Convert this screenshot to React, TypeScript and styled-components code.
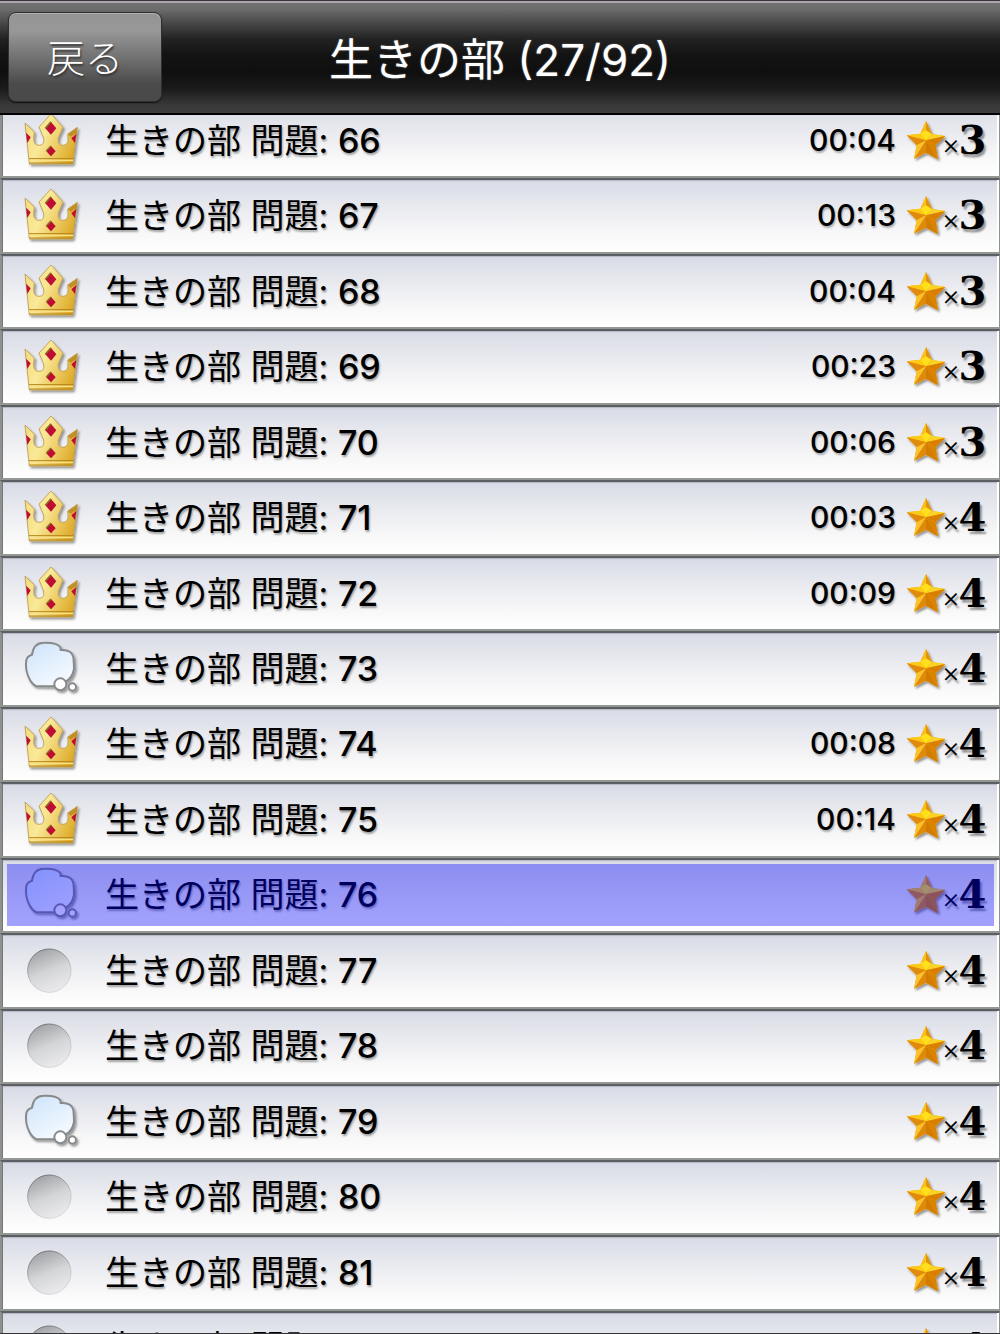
import React, { useLayoutEffect, useRef, useState } from "react";
import styled, { createGlobalStyle, css } from "styled-components";

type Status = "solved" | "thinking" | "open";

interface Problem {
  id: number;
  status: Status;
  level: number;
  time?: string;
}

const problems: Problem[] = [
  { id: 66, status: "solved", level: 3, time: "00:04" },
  { id: 67, status: "solved", level: 3, time: "00:13" },
  { id: 68, status: "solved", level: 3, time: "00:04" },
  { id: 69, status: "solved", level: 3, time: "00:23" },
  { id: 70, status: "solved", level: 3, time: "00:06" },
  { id: 71, status: "solved", level: 4, time: "00:03" },
  { id: 72, status: "solved", level: 4, time: "00:09" },
  { id: 73, status: "thinking", level: 4 },
  { id: 74, status: "solved", level: 4, time: "00:08" },
  { id: 75, status: "solved", level: 4, time: "00:14" },
  { id: 76, status: "thinking", level: 4 },
  { id: 77, status: "open", level: 4 },
  { id: 78, status: "open", level: 4 },
  { id: 79, status: "thinking", level: 4 },
  { id: 80, status: "open", level: 4 },
  { id: 81, status: "open", level: 4 },
  { id: 82, status: "open", level: 4 },
];

const GlobalStyle = createGlobalStyle`
  *, *::before, *::after { box-sizing: border-box; }
  body {
    margin: 0;
    background: #fff;
    font-family: Inter, "Noto Sans CJK JP", sans-serif;
  }
`;

const Screen = styled.div`
  display: flex;
  flex-direction: column;
  height: 100vh;
  border-bottom: 1px solid #333338;
`;

const Header = styled.header`
  display: grid;
  grid-template-columns: 1fr auto 1fr;
  align-items: center;
  flex: none;
  height: 115px;
  padding: 0 8px;
  border-top: 1px solid #3a333a;
  border-bottom: 2px solid #000;
  box-shadow: inset 0 2px 0 #aaa6ab;
  background: linear-gradient(
    #747474 0,
    #6c6c6c 8px,
    #484848 22px,
    #222 38px,
    #131313 54px,
    #0f0f0f 72px,
    #1b1b1b 88px,
    #383838 104px,
    #3e3e3e 112px
  );
`;

const BackButton = styled.button`
  justify-self: start;
  width: 154px;
  height: 90px;
  padding: 2px 0 0;
  border: 1px solid #303030;
  border-radius: 8px;
  background: linear-gradient(#949494, #989898 20%, #707070 52%, #4b4b4b 80%, #4a4a4a);
  box-shadow: inset 0 1px 0 #b0b0b0, 0 1px 1px #111;
  color: #fff;
  font-family: inherit;
  font-size: 38px;
  font-weight: 300;
  line-height: 48px;
  text-shadow: 1px 2px 2px #333;
`;

const Title = styled.h1`
  margin: 0;
  padding-top: 6px;
  color: #fff;
  font-size: 44px;
  font-weight: 400;
  line-height: 60px;
  text-shadow: 0 0 2px #666;
  white-space: nowrap;
`;

const Scroller = styled.main`
  flex: 1;
  min-height: 0;
  overflow-y: auto;
  scrollbar-width: none;
`;

const List = styled.ul`
  display: grid;
  grid-auto-rows: 1fr;
  min-height: 1283px;
  margin: 0;
  padding: 0;
  list-style: none;
`;

const Item = styled.li`
  display: grid;
`;

const RowButton = styled.button<{ $selected: boolean }>`
  position: relative;
  display: flex;
  align-items: center;
  width: 100%;
  min-height: 75px;
  padding: 0 12px 0 21px;
  border: solid;
  border-width: 2px 1px 2px 2px;
  border-color: #5b5f64 #8e928f #939894 #8e928f;
  background: linear-gradient(#d8dbe6, #eaebf0 40%, #f8f8f9 75%, #fff);
  box-shadow: inset -2px 0 0 #fff, inset 1px 0 0 #74787a, inset 0 1px 1px #b4b7c1;
  color: #000;
  font-family: inherit;
  text-align: left;

  ${(p) =>
    p.$selected &&
    css`
      &::after {
        content: "";
        position: absolute;
        inset: 4px 5px 5px;
        background: rgba(0, 0, 255, 0.36);
      }
    `}
`;

const StatusIcon = styled.svg`
  flex: none;
  width: 58px;
  height: 58px;
  margin-bottom: 2px;
  overflow: visible;
`;

const Name = styled.span`
  flex: 1;
  padding-left: 24px;
  font-size: 34px;
  font-weight: 400;
  line-height: 48px;
  text-shadow: 1px 2px 2px rgba(0, 0, 0, 0.35);
`;

const Num = styled.span`
  font-weight: 500;
`;

const Time = styled.time`
  padding: 0 10px 2px 0;
  font-size: 30px;
  font-weight: 500;
  line-height: 48px;
  text-shadow: 1px 2px 2px rgba(0, 0, 0, 0.3);
`;

const Rating = styled.span`
  display: grid;
  grid-template-columns: 38px 14px 29px;
  align-items: baseline;
  justify-items: center;
  line-height: 48px;
  text-shadow: 2px 3px 2px rgba(0, 0, 0, 0.4);
`;

const StarIcon = styled.svg`
  align-self: center;
  width: 42px;
  height: 42px;
  justify-self: start;
  overflow: visible;
`;

const Times = styled.span`
  font-size: 28px;
  font-weight: 300;
`;

const Level = styled.span`
  padding-top: 2px;
  font-family: "DejaVu Serif", serif;
  font-size: 40px;
  font-weight: 700;
`;

const Defs = styled.svg`
  display: block;
  width: 0;
  height: 0;
`;

function SharedDefs() {
  return (
    <Defs aria-hidden="true">
      <defs>
        <linearGradient id="gold" x1="0" y1="0.3" x2="1" y2="0.7">
          <stop offset="0" stopColor="#f5dc80" />
          <stop offset="0.35" stopColor="#fae998" />
          <stop offset="1" stopColor="#dca722" />
        </linearGradient>
        <linearGradient id="sky" x1="0.2" y1="0" x2="0.8" y2="1">
          <stop offset="0" stopColor="#cfe5fb" />
          <stop offset="1" stopColor="#f8fbff" />
        </linearGradient>
        <linearGradient id="dent" x1="0.3" y1="0" x2="0.7" y2="1">
          <stop offset="0" stopColor="#a0a1a4" />
          <stop offset="0.5" stopColor="#d4d5d7" />
          <stop offset="1" stopColor="#ececee" />
        </linearGradient>
        <linearGradient id="dentEdge" x1="0.3" y1="0" x2="0.7" y2="1">
          <stop offset="0" stopColor="#6b6d71" />
          <stop offset="0.6" stopColor="#c4c5c8" />
          <stop offset="1" stopColor="#d8d9db" />
        </linearGradient>
        <filter id="drop" x="-20%" y="-20%" width="150%" height="150%">
          <feDropShadow dx="5" dy="6" stdDeviation="3" floodColor="#000" floodOpacity="0.4" />
        </filter>
      </defs>
    </Defs>
  );
}

function Crown() {
  return (
    <StatusIcon viewBox="69 225 174 174" aria-label="正解" role="img">
      <g filter="url(#drop)">
        <path
          d="M153 234 L189 273 L175 306 Q172 328 188 328 Q206 328 204 306 L203 294 L232 274 L218 384 H88 L75 261 L103 288 L101 306 Q100 328 117 328 Q135 328 131 306 L117 273 Z"
          fill="url(#gold)"
          stroke="#b99a50"
          strokeWidth="2.5"
          strokeLinejoin="round"
        />
        <path d="M87 368 H220 M88 381 H218" stroke="#b58318" strokeWidth="3" />
        <path d="M87 373 H219" stroke="#f8e184" strokeWidth="4" />
        <path d="M153 258 L169 277 L153 296 L136 277 Z" fill="#bd0931" />
        <path d="M136 277 L153 257" stroke="#8b6a20" strokeWidth="5" />
        <path d="M153 330 L167 346 L153 361 L139 346 Z" fill="#bd0931" />
        <path d="M139 345 L153 330" stroke="#8b6a20" strokeWidth="5" />
        <path d="M78 290 L92 304 L82 321 Z" fill="#bd0931" />
        <path d="M229 294 L214 307 L225 321 Z" fill="#bd0931" />
        <path d="M204 294 L232 275 L230 291 L211 303 Z" fill="#c18f25" />
      </g>
    </StatusIcon>
  );
}

function Cloud() {
  return (
    <StatusIcon viewBox="69 37 174 174" aria-label="考え中" role="img">
      <g filter="url(#drop)" stroke="#87898b" strokeWidth="6">
        <path
          d="M96 84 Q101 48 132 48 Q172 47 181 62 L182 70 Q215 68 220 91 Q222 109 222 127 Q217 155 196 165 Q181 181 162 179 L108 178 Q98 174 90 160 Q74 131 79 100 Q82 88 96 84 Z"
          fill="url(#sky)"
        />
        <circle cx="181" cy="173" r="18" fill="#fff" />
        <circle cx="217" cy="181" r="11" fill="#fff" />
      </g>
    </StatusIcon>
  );
}

function Dent() {
  return (
    <StatusIcon viewBox="69 271 174 174" aria-label="未挑戦" role="img">
      <circle cx="148" cy="360" r="65" fill="url(#dent)" stroke="url(#dentEdge)" strokeWidth="3" />
    </StatusIcon>
  );
}

function Star() {
  return (
    <StarIcon viewBox="318 47 126 126" aria-hidden="true">
      <g filter="url(#drop)">
        <path d="M378 50 L396 89 L436 95 L407 123 L414 165 L378 145 L342 163 L350 123 L320 93 L361 88 Z" fill="#f7ab0b" />
        <path d="M378 50 L361 88 L378 108 Z" fill="#fbbf1c" />
        <path d="M378 50 L396 89 L378 108 Z" fill="#e2930b" />
        <path d="M320 93 L361 88 L378 108 Z" fill="#fdca19" />
        <path d="M320 93 L378 108 L350 123 Z" fill="#e08b08" />
        <path d="M361 88 L378 78 L396 89 L378 108 Z" fill="#ffe01c" />
        <path d="M396 89 L436 95 L378 108 Z" fill="#fbd226" />
        <path d="M436 95 L407 123 L378 108 Z" fill="#d97f03" />
        <path d="M378 108 L407 123 L414 165 Z" fill="#db8306" />
        <path d="M378 108 L414 165 L378 145 Z" fill="#d27b06" />
        <path d="M378 108 L378 145 L342 163 Z" fill="#de8a0a" />
        <path d="M378 108 L342 163 L350 123 Z" fill="#fac12a" />
      </g>
    </StarIcon>
  );
}

const icons: Record<Status, () => React.JSX.Element> = {
  solved: Crown,
  thinking: Cloud,
  open: Dent,
};

interface RowProps {
  problem: Problem;
  selected: boolean;
  onSelect: (id: number) => void;
}

function Row({ problem, selected, onSelect }: RowProps) {
  const Icon = icons[problem.status];
  return (
    <Item>
      <RowButton type="button" $selected={selected} aria-pressed={selected} onClick={() => onSelect(problem.id)}>
        <Icon />
        <Name>
          生きの部 問題: <Num>{problem.id}</Num>
        </Name>
        {problem.time && <Time>{problem.time}</Time>}
        <Rating>
          <Star />
          <Times>×</Times>
          <Level>{problem.level}</Level>
        </Rating>
      </RowButton>
    </Item>
  );
}

export default function App() {
  const [selected, setSelected] = useState(76);
  const scroller = useRef<HTMLElement>(null);

  useLayoutEffect(() => {
    if (scroller.current) scroller.current.scrollTop = 12;
  }, []);

  return (
    <Screen>
      <GlobalStyle />
      <SharedDefs />
      <Header>
        <BackButton type="button">戻る</BackButton>
        <Title>生きの部 (27/92)</Title>
      </Header>
      <Scroller ref={scroller}>
        <List>
          {problems.map((p) => (
            <Row key={p.id} problem={p} selected={p.id === selected} onSelect={setSelected} />
          ))}
        </List>
      </Scroller>
    </Screen>
  );
}
